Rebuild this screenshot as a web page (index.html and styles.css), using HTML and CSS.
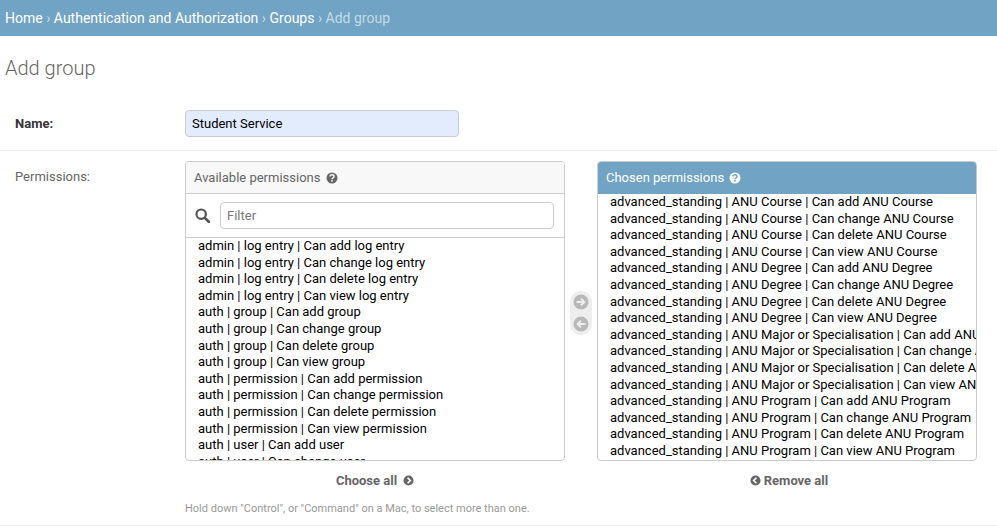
FILE: index.html
```html
<!DOCTYPE html>
<html lang="en">
<head>
    <meta charset="UTF-8">
    <title>Add group</title>
    <link rel="stylesheet" href="styles.css">
</head>
<body>
    <div class="breadcrumbs">
        <a href="#">Home</a> › <a href="#">Authentication and Authorization</a> › <a href="#">Groups</a> › Add group
    </div>
    <div class="content">
        <h1>Add group</h1>
        <form>
            <div class="form-row name-row">
                <label class="required" for="id_name">Name:</label>
                <input id="id_name" class="name-input" value="Student Service">
            </div>
            <div class="form-row perm-row">
                <label class="perm-label">Permissions:</label>
                <div class="perm-field">
                    <div class="selector">
                        <div class="selector-col">
                            <div class="selector-box">
                                <h2 class="box-title">Available permissions
                                    <svg class="help" viewBox="0 0 12 12"><circle cx="6" cy="6" r="5.5" fill="currentColor"/><path d="M4 4.6C4 3.4 4.9 2.8 6 2.8S8 3.5 8 4.5C8 5.8 6 5.8 6 7.2" fill="none" stroke="#f8f8f8" stroke-width="1.5"/><rect x="5.2" y="8" width="1.6" height="1.6" fill="#f8f8f8"/></svg>
                                </h2>
                                <div class="filter-bar">
                                    <svg class="search" viewBox="0 0 15 15"><circle cx="6.2" cy="6.2" r="4.7" fill="none" stroke="currentColor" stroke-width="2.2"/><path d="M9.8 9.8L14 14" stroke="currentColor" stroke-width="2.6" stroke-linecap="round"/></svg>
                                    <input class="filter-input" placeholder="Filter">
                                </div>
                                <ul class="options available">
                                    <li>admin | log entry | Can add log entry</li>
                                    <li>admin | log entry | Can change log entry</li>
                                    <li>admin | log entry | Can delete log entry</li>
                                    <li>admin | log entry | Can view log entry</li>
                                    <li>auth | group | Can add group</li>
                                    <li>auth | group | Can change group</li>
                                    <li>auth | group | Can delete group</li>
                                    <li>auth | group | Can view group</li>
                                    <li>auth | permission | Can add permission</li>
                                    <li>auth | permission | Can change permission</li>
                                    <li>auth | permission | Can delete permission</li>
                                    <li>auth | permission | Can view permission</li>
                                    <li>auth | user | Can add user</li>
                                    <li>auth | user | Can change user</li>
                                </ul>
                            </div>
                            <a class="all-link" href="#">Choose all
                                <svg class="all-icon" viewBox="0 0 12 12"><circle cx="6" cy="6" r="5.5" fill="currentColor"/><path d="M5 3L8 6L5 9" fill="none" stroke="#fff" stroke-width="1.8"/></svg>
                            </a>
                        </div>
                        <div class="chooser">
                            <svg viewBox="0 0 16 16"><circle cx="8" cy="8" r="7.5" fill="#b8b8b8"/><path d="M3.5 8H11M8 4.6L11.4 8L8 11.4" fill="none" stroke="#eee" stroke-width="2"/></svg>
                            <svg viewBox="0 0 16 16"><circle cx="8" cy="8" r="7.5" fill="#b8b8b8"/><path d="M12.5 8H5M8 4.6L4.6 8L8 11.4" fill="none" stroke="#eee" stroke-width="2"/></svg>
                        </div>
                        <div class="selector-col">
                            <div class="selector-box">
                                <h2 class="box-title chosen-title">Chosen permissions
                                    <svg class="help" viewBox="0 0 12 12"><circle cx="6" cy="6" r="5.5" fill="currentColor"/><path d="M4 4.6C4 3.4 4.9 2.8 6 2.8S8 3.5 8 4.5C8 5.8 6 5.8 6 7.2" fill="none" stroke="#70a3c4" stroke-width="1.5"/><rect x="5.2" y="8" width="1.6" height="1.6" fill="#70a3c4"/></svg>
                                </h2>
                                <ul class="options chosen">
                                    <li>advanced_standing | ANU Course | Can add ANU Course</li>
                                    <li>advanced_standing | ANU Course | Can change ANU Course</li>
                                    <li>advanced_standing | ANU Course | Can delete ANU Course</li>
                                    <li>advanced_standing | ANU Course | Can view ANU Course</li>
                                    <li>advanced_standing | ANU Degree | Can add ANU Degree</li>
                                    <li>advanced_standing | ANU Degree | Can change ANU Degree</li>
                                    <li>advanced_standing | ANU Degree | Can delete ANU Degree</li>
                                    <li>advanced_standing | ANU Degree | Can view ANU Degree</li>
                                    <li>advanced_standing | ANU Major or Specialisation | Can add ANU Major or Specialisation</li>
                                    <li>advanced_standing | ANU Major or Specialisation | Can change ANU Major or Specialisation</li>
                                    <li>advanced_standing | ANU Major or Specialisation | Can delete ANU Major or Specialisation</li>
                                    <li>advanced_standing | ANU Major or Specialisation | Can view ANU Major or Specialisation</li>
                                    <li>advanced_standing | ANU Program | Can add ANU Program</li>
                                    <li>advanced_standing | ANU Program | Can change ANU Program</li>
                                    <li>advanced_standing | ANU Program | Can delete ANU Program</li>
                                    <li>advanced_standing | ANU Program | Can view ANU Program</li>
                                </ul>
                            </div>
                            <a class="all-link remove-link" href="#">
                                <svg class="all-icon" viewBox="0 0 12 12"><circle cx="6" cy="6" r="5.5" fill="currentColor"/><path d="M7 3L4 6L7 9" fill="none" stroke="#fff" stroke-width="1.8"/></svg>
                                Remove all
                            </a>
                        </div>
                    </div>
                    <p class="help-text">Hold down "Control", or "Command" on a Mac, to select more than one.</p>
                </div>
            </div>
        </form>
    </div>
</body>
</html>
```

FILE: styles.css
```css
html, body {
    height: 528px;
    overflow: hidden;
}
body {
    margin: 0;
    font-family: Roboto, "Liberation Sans", sans-serif;
    font-size: 14px;
    color: #333;
    background: #fff;
}
.breadcrumbs {
    height: 36px;
    line-height: 36px;
    padding-left: 5px;
    background: #70a3c4;
    color: #c4dce8;
    font-size: 14px;
    white-space: nowrap;
}
.breadcrumbs a {
    color: #fff;
    text-decoration: none;
}
h1 {
    box-sizing: border-box;
    margin: 0;
    padding: 20px 0 0 5px;
    height: 55px;
    font-size: 20px;
    font-weight: 300;
    line-height: 24px;
    color: #666;
}
.form-row {
    display: flex;
    border-bottom: 1px solid #eee;
    padding-left: 15px;
}
.name-row {
    align-items: center;
    height: 60px;
    box-sizing: border-box;
    padding: 19px 0 13px 15px;
}
label {
    width: 170px;
    flex: none;
    font-size: 13px;
}
.required {
    font-weight: 700;
    color: #333;
}
.perm-label {
    padding-top: 8px;
    color: #666;
}
.name-input {
    box-sizing: border-box;
    width: 274px;
    height: 27px;
    padding: 0 6px;
    border: 1px solid #ccc;
    border-radius: 4px;
    background: #e3ecfc;
    font: 13px Roboto, sans-serif;
    color: #000;
}
.perm-row {
    height: 375px;
    box-sizing: border-box;
    padding-top: 10px;
}
.selector {
    display: flex;
}
.selector-col {
    width: 380px;
}
.selector-box {
    box-sizing: border-box;
    height: 300px;
    border: 1px solid #ccc;
    border-radius: 4px;
    overflow: hidden;
}
.box-title {
    box-sizing: border-box;
    display: flex;
    align-items: center;
    gap: 6px;
    height: 32px;
    margin: 0;
    padding-left: 8px;
    font-size: 13px;
    font-weight: 400;
    color: #666;
    background: #f8f8f8;
    border-bottom: 1px solid #ccc;
}
.chosen-title {
    gap: 5px;
    color: #fff;
    background: #70a3c4;
    border-bottom-color: #70a3c4;
}
.help {
    width: 12px;
    height: 12px;
}
.filter-bar {
    box-sizing: border-box;
    display: flex;
    align-items: center;
    height: 44px;
    padding: 0 10px 0 9px;
    gap: 10px;
    color: #555;
    border-bottom: 1px solid #ccc;
}
.search {
    width: 15px;
    height: 15px;
}
.filter-input {
    box-sizing: border-box;
    flex: 1;
    height: 27px;
    padding: 0 6px;
    border: 1px solid #ccc;
    border-radius: 4px;
    font: 13px Roboto, sans-serif;
}
.filter-input::placeholder {
    color: #777;
}
.options {
    list-style: none;
    margin: 0;
    color: #000;
    font-size: 13px;
    line-height: 16.6px;
    white-space: nowrap;
    overflow: hidden;
}
.available {
    padding: 0 0 0 12px;
    height: 222px;
}
.chosen {
    padding: 0 0 0 12px;
    height: 267px;
}
.chooser {
    align-self: flex-start;
    display: flex;
    flex-direction: column;
    gap: 6px;
    box-sizing: border-box;
    width: 22px;
    margin: 130px 5px 0;
    padding: 3px;
    background: #eee;
    border-radius: 11px;
}
.chooser svg {
    width: 16px;
    height: 16px;
}
.all-link {
    display: flex;
    justify-content: center;
    align-items: center;
    gap: 6px;
    height: 38px;
    font-size: 13px;
    font-weight: 700;
    color: #666;
    text-decoration: none;
}
.remove-link {
    gap: 3px;
    padding-left: 4px;
}
.all-icon {
    width: 11px;
    height: 11px;
}
.help-text {
    margin: 0;
    padding-top: 3px;
    font-size: 11px;
    color: #999;
}
```
